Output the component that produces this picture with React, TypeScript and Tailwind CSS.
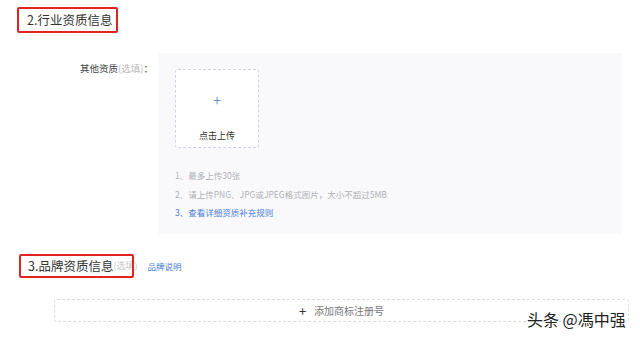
const font = {
  fontFamily: '"Noto Sans CJK SC", "Noto Sans", sans-serif',
};

const hints = [
  { text: "1、最多上传30张", link: false },
  { text: "2、请上传PNG、JPG或JPEG格式图片，大小不超过5MB", link: false },
  { text: "3、查看详细资质补充规则", link: true },
];

const App = () => {
  return (
    <div
      className="relative w-[640px] h-[338px] overflow-hidden bg-white text-[#333]"
      style={font}
    >
      {/* 2. 行业资质信息 */}
      <div className="relative ml-[17px] mt-[7px] h-[26px] w-[101px]">
        <span className="absolute left-[10px] top-[4px] text-[12.5px] leading-[18px] text-[#333]">
          2.行业资质信息
        </span>
        <div className="absolute inset-0 rounded-[2px] border-2 border-[#e3231f]" />
      </div>

      <div className="mt-[20px] flex">
        <div className="w-[158px] pr-[5px] pt-[8px] text-right text-[9.5px] leading-[14px]">
          <span className="text-[#444]">其他资质</span>
          <span className="text-[#bbb]">(选填)</span>
          <span className="text-[#444]">：</span>
        </div>
        <div className="flex h-[181px] w-[464px] flex-col bg-[#f9f9fc] pl-[17px] pt-[16px]">
          <div className="flex h-[79px] w-[84px] flex-col items-center rounded-[3px] border border-dashed border-[#cfd2e3] bg-white">
            <span className="mt-[22px] text-[15px] font-light leading-[16px] text-[#4a78d0]">
              +
            </span>
            <span className="mt-[22px] text-[9px] leading-[12px] text-[#333]">
              点击上传
            </span>
          </div>
          <div className="mt-[21px] flex flex-col gap-[6.5px]">
            {hints.map((h) => (
              <span
                key={h.text}
                className={
                  h.link
                    ? "text-[8.5px] leading-[12px] text-[#4a80d8]"
                    : "text-[8.5px] leading-[12px] text-[#b0b0b6]"
                }
              >
                {h.text}
              </span>
            ))}
          </div>
        </div>
      </div>

      {/* 3. 品牌资质信息 */}
      <div className="relative ml-[19px] mt-[20px] flex h-[24px] items-center">
        <span className="ml-[9px] text-[12.5px] leading-[18px] text-[#333]">
          3.品牌资质信息
        </span>
        <span className="text-[9px] leading-[12px] text-[#c4c4c4]">(选填)</span>
        <span className="ml-[10px] text-[8.5px] leading-[12px] text-[#4a80d8]">
          品牌说明
        </span>
        <div className="absolute left-0 top-0 h-[24px] w-[115px] rounded-[2px] border-2 border-[#e3231f]" />
      </div>

      <div className="ml-[54px] mt-[21px] flex h-[23px] w-[575px] items-center justify-center rounded-[3px] border border-dashed border-[#dcdcdc]">
        <span className="text-[13px] leading-[14px] text-[#333]">+</span>
        <span className="ml-[8px] text-[10px] leading-[14px] text-[#777]">
          添加商标注册号
        </span>
      </div>

      <div
        className="absolute left-[527px] top-[309px] text-[16px] leading-[20px] text-[#222]"
        style={{ textShadow: "0 0 2px #fff, 0 0 2px #fff" }}
      >
        头条 @馮中强
      </div>
    </div>
  );
};

export default App;
